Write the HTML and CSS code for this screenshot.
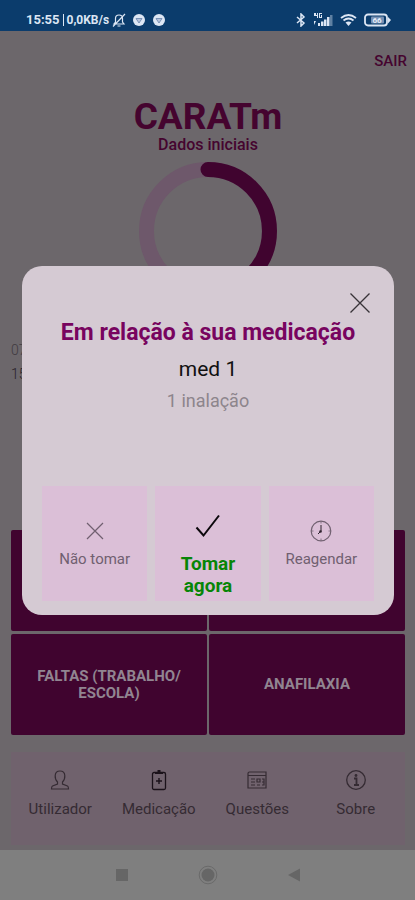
FILE: index.html
```html
<!DOCTYPE html>
<html lang="pt">
<head>
<meta charset="utf-8">
<meta name="viewport" content="width=device-width, initial-scale=1">
<title>CARATm</title>
<link rel="stylesheet" href="styles.css">
</head>
<body>
<div class="phone">
  <header class="status">
    <div class="status-group">
      <span>15:55</span><span class="divider"></span><span class="speed">0,0KB/s</span>
      <svg width="14" height="14" viewBox="0 0 14 14" fill="none" stroke="currentColor" stroke-width="1.200"><path d="M2 11h10L10.500 9V5.500a3.500 3.500 0 0 0-7 0V9zM5.500 13h3M1 13.500 13 1"/></svg>
      <svg class="browser" width="12" height="12" viewBox="0 0 12 12"><circle cx="6" cy="6" r="6" fill="currentColor"/><path d="M3 4.500h6L6 9z" fill="#b5c3dc" stroke="#6682aa" stroke-width=".8"/></svg>
      <svg class="browser" width="12" height="12" viewBox="0 0 12 12"><circle cx="6" cy="6" r="6" fill="currentColor"/><path d="M3 4.500h6L6 9z" fill="#b5c3dc" stroke="#6682aa" stroke-width=".8"/></svg>
    </div>
    <div class="status-group radios">
      <svg width="10" height="14" viewBox="0 0 10 14" fill="none" stroke="currentColor" stroke-width="1.500"><path d="m1 4 7 6-3 3V1l3 3-7 6"/></svg>
      <svg width="20" height="14" viewBox="0 0 20 14" fill="currentColor"><path d="M1 0h2v2h1V0h1v5H4V3H1zM6 0h3v1H7v3h1V2h1v3H6zM1 8h2l-2 4zM5 10h2v3H5zM8 8.500h2.500V13H8zM11 6.500h2.500V13H11zM14 4h2.500v9H14z"/><path d="M17 2h2.500v11H17z" opacity=".4"/></svg>
      <svg width="17" height="14" viewBox="0 0 17 14" fill="none" stroke="currentColor" stroke-width="1.800"><path d="M1 5Q8.500-1 16 5M3.500 7.500q5-4 10 0"/><path d="M5.500 9.500q3-2 6 0l-3 3.500z" fill="currentColor" stroke="none"/></svg>
      <svg width="27" height="14" viewBox="0 0 27 14"><rect x="1" y="1.500" width="22" height="11" rx="3" fill="none" stroke="currentColor" stroke-width="1.800"/><path d="M24 4 27 7l-3 3.500z" fill="currentColor"/><rect x="7" y="3.500" width="13" height="7" rx="1" fill="#7691b4"/><text x="13" y="10" text-anchor="middle" class="charge">66</text></svg>
    </div>
  </header>

  <div class="screen">
    <main class="home">
      <a class="logout" href="#">SAIR</a>
      <h1>CARATm</h1>
      <p class="stage">Dados iniciais</p>
      <svg class="ring" viewBox="0 0 138 138" fill="none" stroke-width="15">
        <circle cx="69" cy="69" r="61.500" stroke="#6e586b"/>
        <path d="M69 7.500a61.500 61.500 0 0 1 0 123" stroke="#40042f" stroke-linecap="round"/>
      </svg>
      <div class="dates"><span>07</span><span class="day">15</span></div>
      <div class="tiles">
        <button class="tile" type="button"></button>
        <button class="tile" type="button"></button>
        <button class="tile" type="button">FALTAS (TRABALHO/<br>ESCOLA)</button>
        <button class="tile" type="button">ANAFILAXIA</button>
      </div>
      <nav class="tabs">
        <a href="#"><svg width="20" height="22" viewBox="0 0 20 22" fill="none" stroke="currentColor" stroke-width="1.200"><path d="M7.500 13C5.500 11 5 9 5.200 6.500 5.400 3.500 7.200 2 10 2s4.600 1.500 4.800 4.500c.2 2.500-.3 4.500-2.300 6.500v2l5 2q1 .5 1 3h-17q0-2.500 1-3l5-2z"/></svg>Utilizador</a>
        <a href="#"><svg class="clipboard" width="20" height="22" viewBox="0 0 20 22" fill="none" stroke="currentColor" stroke-width="1.300"><rect x="3.500" y="3.500" width="13" height="17" rx="1.500"/><path d="M6 4h8M8.500 2h3" stroke-width="2.200"/><path d="M10 9v6M7 12h6" stroke-width="1.400"/></svg>Medicação</a>
        <a href="#"><svg width="20" height="22" viewBox="0 0 20 22" fill="none" stroke="currentColor" stroke-width="1.200"><path d="M1 4.500q0-1.500 1.500-1.500H19v16H1zM1 6.500h18M4 10h4M4 13h4M4 16h4M10 10h3v3h-3zM10 16h3M15 10h2v6h-2M15 13h2"/></svg>Questões</a>
        <a href="#"><svg width="20" height="22" viewBox="0 0 20 22" fill="none" stroke="currentColor" stroke-width="1.300"><circle cx="10" cy="11" r="9.300"/><path d="M8 9.500h2.500v6M8 16h5" stroke-width="1.800"/><circle cx="10" cy="6.500" r="1.400" fill="currentColor" stroke="none"/></svg>Sobre</a>
      </nav>
    </main>

    <div class="overlay">
      <section class="dialog" role="dialog" aria-labelledby="dialog-title">
        <button class="close" type="button" aria-label="Fechar"><svg width="20" height="20" viewBox="0 0 20 20" fill="none" stroke="currentColor" stroke-width="1.300"><path d="m.5.5 19 19M19.500.5l-19 19"/></svg></button>
        <h2 id="dialog-title">Em relação à sua medicação</h2>
        <p class="drug">med 1</p>
        <p class="dose">1 inalação</p>
        <div class="choices">
          <button class="choice" type="button"><svg width="22" height="22" viewBox="0 0 22 22" fill="none" stroke="currentColor" stroke-width="1.200"><path d="m3 3 16 16M19 3 3 19"/></svg>Não tomar</button>
          <button class="choice primary" type="button"><svg width="26" height="26" viewBox="0 0 26 26" fill="none" stroke="#0c080c" stroke-width="2"><path d="m1.500 14.500 7 8 15.500-20"/></svg><span>Tomar<br>agora</span></button>
          <button class="choice" type="button"><svg width="22" height="22" viewBox="0 0 22 22" fill="none" stroke="currentColor" stroke-width="1.200"><circle cx="11" cy="11" r="9.800"/><path d="M11 5v6l-3 3" stroke="#2d222d" stroke-width="1"/><circle cx="10.500" cy="11.500" r="1.300" fill="#2d222d" stroke="none"/><path d="M11 1.500v2M11 18.500v2M1.500 11h2M18.500 11h2" stroke-width=".8"/></svg>Reagendar</button>
        </div>
      </section>
    </div>
  </div>

  <footer class="system">
    <svg width="14" height="14" viewBox="0 0 14 14"><path d="M1 1h12v12H1z" fill="#666"/></svg>
    <svg width="20" height="20" viewBox="0 0 20 20"><circle cx="10" cy="10" r="8.800" fill="none" stroke="#6a6a6a"/><circle cx="10" cy="10" r="6.500" fill="#666"/></svg>
    <svg width="14" height="14" viewBox="0 0 14 14"><path d="M1 7 13 .5v13z" fill="#666"/></svg>
  </footer>
</div>
</body>
</html>
```
FILE: styles.css
```css
* { box-sizing: border-box; }

body {
  margin: 0;
  background: #6c676b;
  font-family: Roboto, "Liberation Sans", sans-serif;
}

h1, h2, p { margin: 0; }

button {
  border: 0;
  padding: 0;
  font: inherit;
}

a { text-decoration: none; }

svg { flex: none; }

.phone {
  display: flex;
  flex-direction: column;
  min-height: 100vh;
}

.status {
  display: flex;
  justify-content: space-between;
  align-items: center;
  padding: 8px 24px 0 26px;
  height: 31px;
  background: #0b3c6c;
  color: #dce6f4;
  font-size: 13px;
  font-weight: 700;
}

.status-group {
  display: flex;
  align-items: center;
  gap: 3px;
}

.divider {
  width: 1px;
  height: 12px;
  background: currentColor;
}

.speed { font-size: 12px; }

.browser { margin: 0 1px 0 4px; }

.radios { gap: 7px; }

.charge {
  fill: #e6eefa;
  font-size: 8px;
}

.screen {
  position: relative;
  display: flex;
  flex: 1;
  flex-direction: column;
}

.home {
  display: flex;
  flex: 1;
  flex-direction: column;
  align-items: center;
  padding: 20px 10px 5px 11px;
  color: #45042f;
}

.logout {
  align-self: flex-end;
  margin-right: -2px;
  color: #45042f;
  font-size: 15px;
  font-weight: 500;
  line-height: 20px;
}

h1 {
  margin-top: 28px;
  font-size: 37px;
  font-weight: 700;
  line-height: 36px;
}

.stage {
  margin-top: 1px;
  font-size: 16px;
  font-weight: 500;
  line-height: 18px;
}

.ring {
  width: 138px;
  margin-top: 8px;
}

.dates {
  display: flex;
  flex-direction: column;
  align-self: stretch;
  margin-top: 38px;
  color: #413b41;
  font-size: 14px;
  font-weight: 300;
  line-height: 24px;
}

.day { color: #292229; }

.tiles {
  display: grid;
  grid-template-columns: 1fr 1fr;
  grid-auto-rows: 101px;
  gap: 3px 2px;
  align-self: stretch;
  margin-top: auto;
}

.tile {
  border-radius: 2px;
  background: #40042f;
  color: #918591;
  font-size: 15px;
  font-weight: 700;
  line-height: 17px;
}

.tabs {
  display: grid;
  grid-template-columns: repeat(4, 1fr);
  align-self: stretch;
  margin-top: 17px;
  background: #70626d;
}

.tabs a {
  display: flex;
  flex-direction: column;
  align-items: center;
  gap: 8px;
  padding: 17px 0 26px;
  color: #352b33;
  font-size: 15px;
  line-height: 20px;
}

.tabs .clipboard { color: #1b121a; }

.overlay {
  position: absolute;
  inset: 0;
  display: flex;
  align-items: center;
  padding: 0 21px 0 22px;
}

.dialog {
  display: flex;
  flex: 1;
  flex-direction: column;
  align-items: center;
  padding: 27px 20px 14px;
  border-radius: 20px;
  background: #d5cad3;
  text-align: center;
}

.close {
  display: flex;
  align-self: flex-end;
  margin-right: 4px;
  background: none;
  color: #383338;
}

h2 {
  margin-top: 6px;
  color: #78045f;
  font-size: 23px;
  font-weight: 700;
  line-height: 28px;
}

.drug {
  margin-top: 8px;
  color: #111;
  font-size: 21px;
  line-height: 28px;
}

.dose {
  margin-top: 6px;
  color: #8d858c;
  font-size: 18px;
  line-height: 24px;
}

.choices {
  display: grid;
  grid-template-columns: repeat(3, 1fr);
  gap: 8px;
  align-self: stretch;
  margin-top: 73px;
}

.choice {
  display: flex;
  flex-direction: column;
  align-items: center;
  justify-content: center;
  gap: 8px;
  height: 115px;
  background: #dbbfd7;
  color: #706070;
  font-size: 15px;
  line-height: 18px;
}

.primary {
  gap: 14px;
  padding-top: 22px;
  color: #078507;
  font-size: 19px;
  font-weight: 700;
  line-height: 22px;
}

.system {
  display: flex;
  align-items: center;
  justify-content: center;
  gap: 69px;
  height: 50px;
  background: #7f7f7f;
}
```
